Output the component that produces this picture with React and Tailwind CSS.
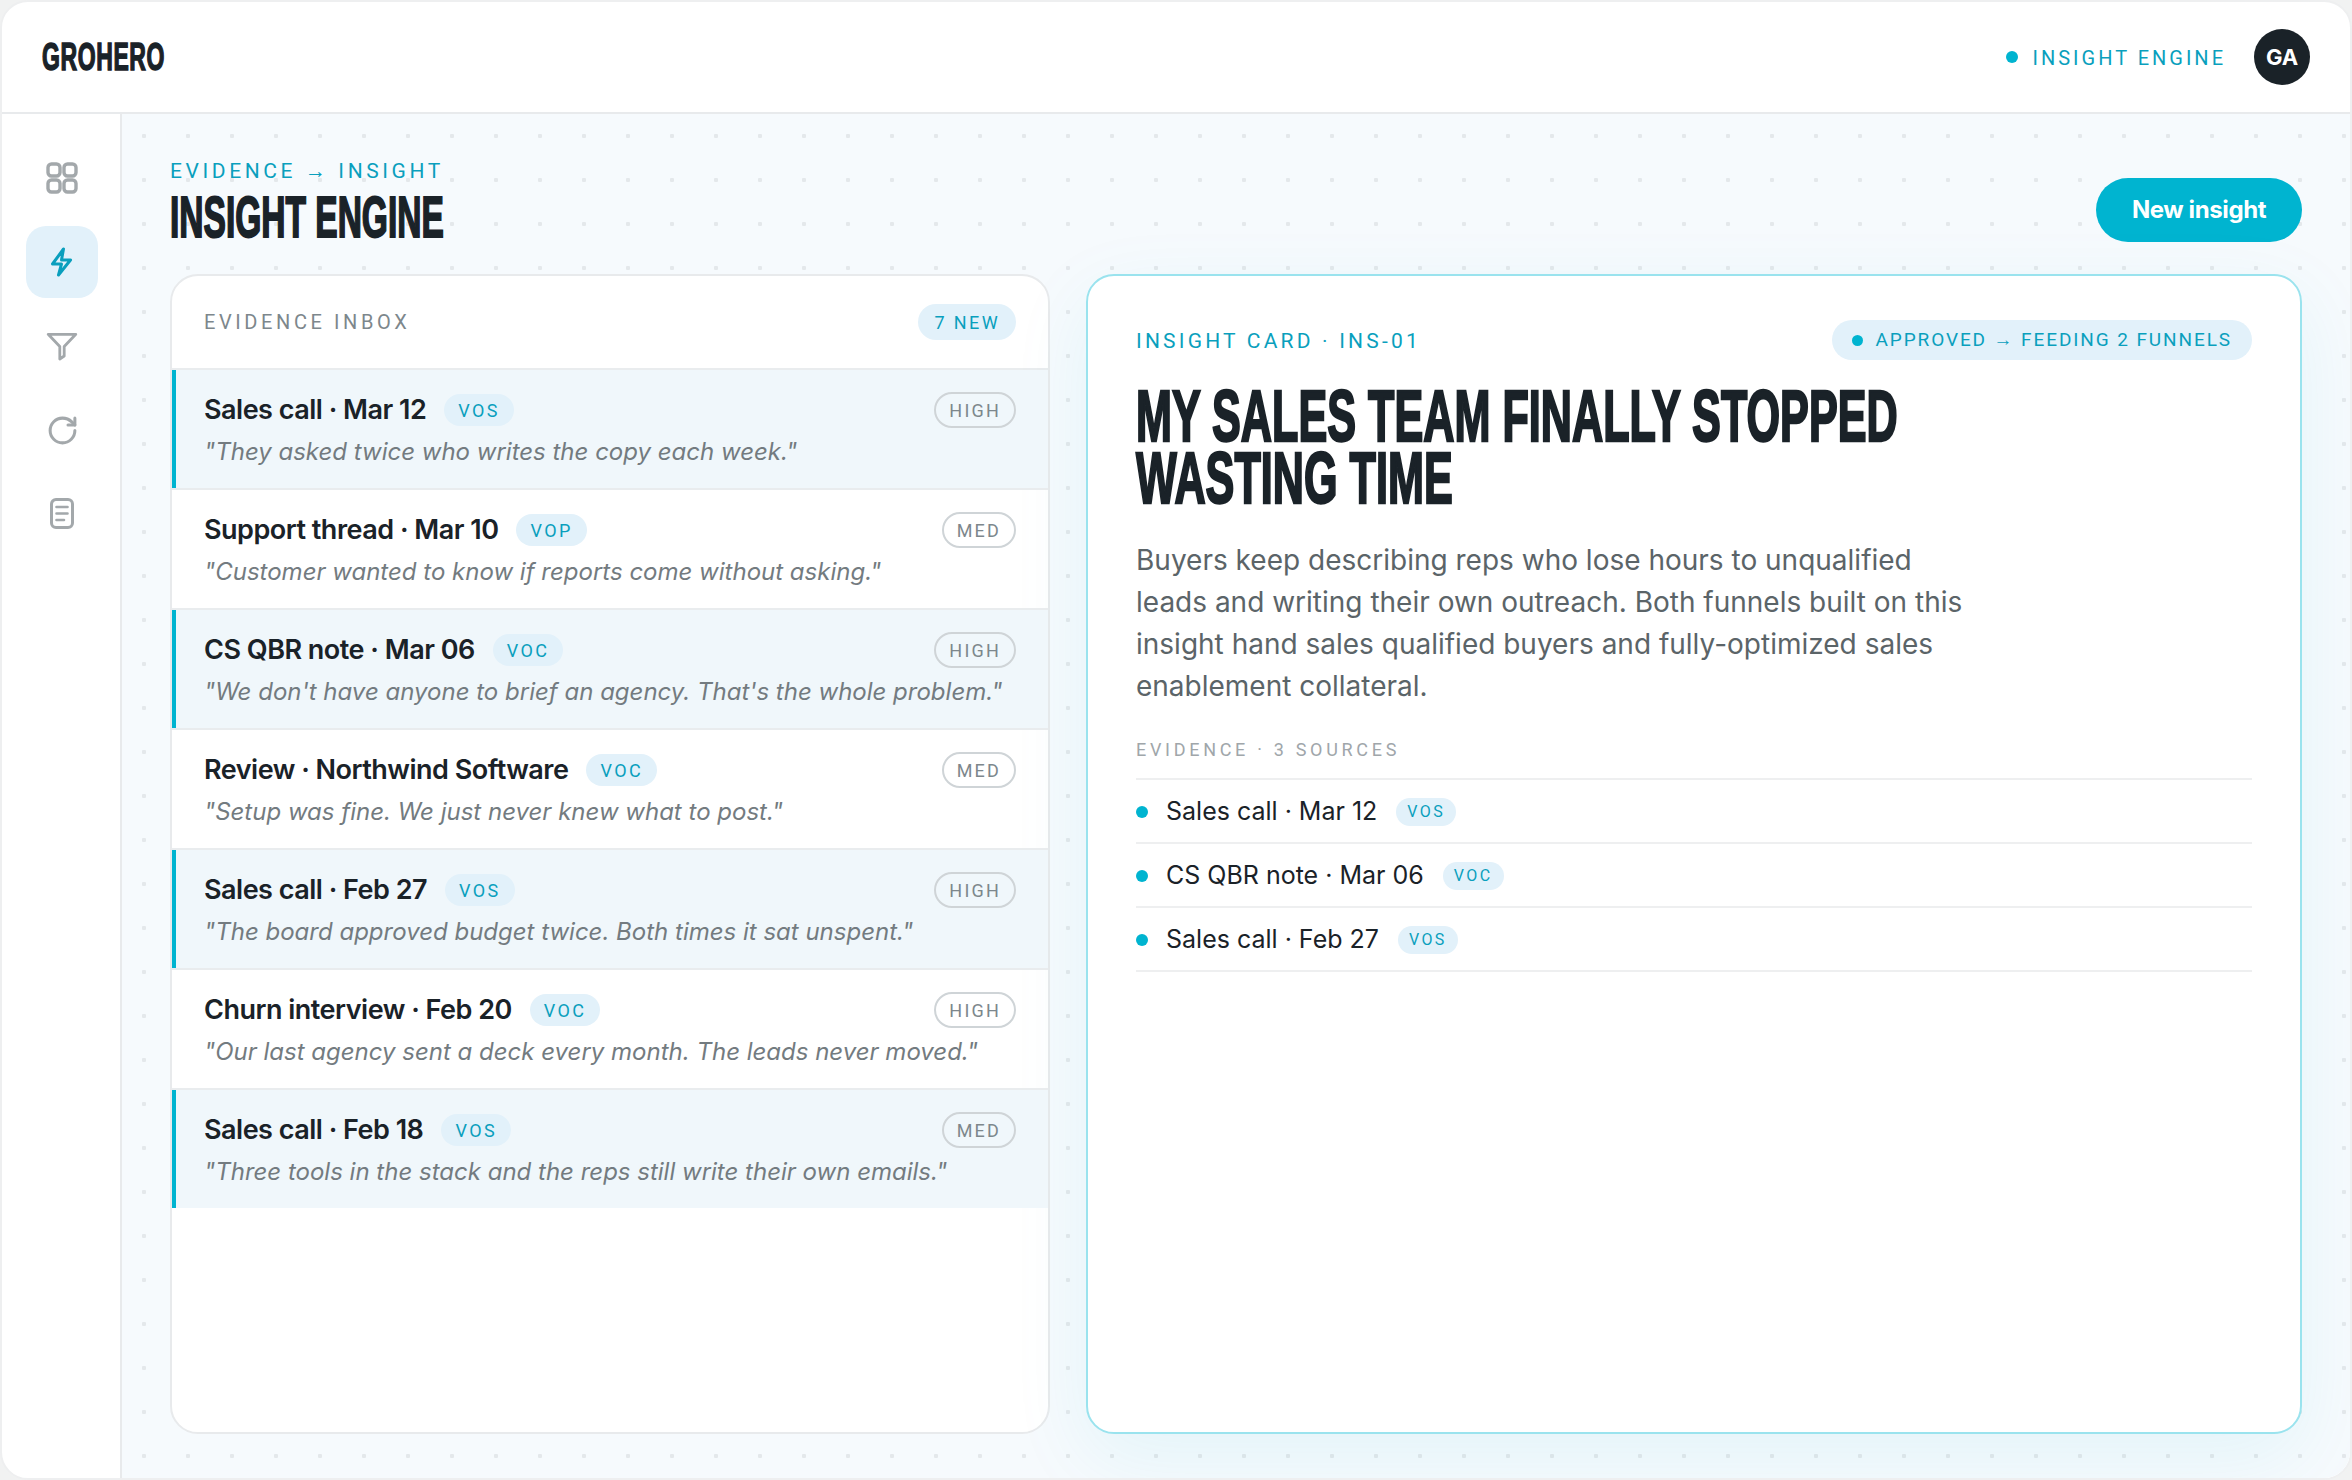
import React from 'react'
import { RotateCw } from 'lucide-react'

const display = "font-['Liberation_Sans',sans-serif] font-bold"
const label = "font-['Roboto',sans-serif]"
const inter = "font-['Inter',sans-serif]"

const evidence = [
  { title: 'Sales call · Mar 12', tag: 'VOS', level: 'HIGH', quote: '"They asked twice who writes the copy each week."', active: true },
  { title: 'Support thread · Mar 10', tag: 'VOP', level: 'MED', quote: '"Customer wanted to know if reports come without asking."' },
  { title: 'CS QBR note · Mar 06', tag: 'VOC', level: 'HIGH', quote: '"We don\'t have anyone to brief an agency. That\'s the whole problem."', active: true },
  { title: 'Review · Northwind Software', tag: 'VOC', level: 'MED', quote: '"Setup was fine. We just never knew what to post."' },
  { title: 'Sales call · Feb 27', tag: 'VOS', level: 'HIGH', quote: '"The board approved budget twice. Both times it sat unspent."', active: true },
  { title: 'Churn interview · Feb 20', tag: 'VOC', level: 'HIGH', quote: '"Our last agency sent a deck every month. The leads never moved."' },
  { title: 'Sales call · Feb 18', tag: 'VOS', level: 'MED', quote: '"Three tools in the stack and the reps still write their own emails."', active: true },
]

const sources = [
  { title: 'Sales call · Mar 12', tag: 'VOS' },
  { title: 'CS QBR note · Mar 06', tag: 'VOC' },
  { title: 'Sales call · Feb 27', tag: 'VOS' },
]

function GridIcon() {
  return (
    <svg width="36" height="36" viewBox="0 0 36 36" fill="none" stroke="#a3a8ab" strokeWidth="3.4">
      <rect x="4" y="4" width="12" height="12" rx="3.5" />
      <rect x="20" y="4" width="12" height="12" rx="3.5" />
      <rect x="4" y="20" width="12" height="12" rx="3.5" />
      <rect x="20" y="20" width="12" height="12" rx="3.5" />
    </svg>
  )
}

function BoltIcon() {
  return (
    <svg width="36" height="36" viewBox="0 0 36 36" fill="none" stroke="#0a9fbd" strokeWidth="3" strokeLinejoin="round">
      <path d="M19.5 5 8.5 20H17.5L14.5 31 26.5 16H17.5Z" />
    </svg>
  )
}

function FunnelIcon() {
  return (
    <svg width="36" height="36" viewBox="0 0 36 36" fill="none" stroke="#a3a8ab" strokeWidth="2.8" strokeLinejoin="round">
      <path d="M4.2 6.3H31.8L20.2 18.5V28L15.8 31V18.5Z" />
    </svg>
  )
}

function DocIcon() {
  return (
    <svg width="36" height="36" viewBox="0 0 36 36" fill="none" stroke="#a3a8ab" strokeWidth="3" strokeLinecap="round">
      <rect x="7.5" y="3.5" width="21" height="28" rx="4.5" />
      <path d="M12.5 11H23.5M12.5 17.5H23.5M12.5 24H20" strokeWidth="2.6" />
    </svg>
  )
}

function EvidenceRow({ item }) {
  return (
    <div className={`relative h-[120px] border-b-2 border-[#e9ecee] pl-8 pr-8 pt-[22px] last:h-[118px] last:border-b-0 ${item.active ? 'bg-[#f0f7fb]' : ''}`}>
      {item.active && <div className="absolute left-0 top-0 bottom-0 w-1 bg-[#00b4d0]" />}
      <div className="flex items-center justify-between h-9">
        <div className="flex items-center gap-[18px]">
          <span className={`${inter} text-[27px] font-semibold tracking-[-0.5px] text-[#1a2228]`}>{item.title}</span>
          <span className={`${label} flex items-center h-8 px-[14px] rounded-full bg-[#e2f1fa] text-[18px] tracking-[2.4px] text-[#0a9fbd]`}>{item.tag}</span>
        </div>
        <span className={`${label} flex items-center h-9 px-[13px] rounded-full border-2 border-[#cfd4d7] text-[18px] tracking-[2.2px] text-[#7d878c]`}>{item.level}</span>
      </div>
      <p className={`${inter} mt-[6px] whitespace-nowrap text-[24px] leading-[36px] italic text-[#737b80]`}>{item.quote}</p>
    </div>
  )
}

function App() {
  return (
    <div className="h-[1480px] w-[2352px] bg-[#f1f2f2] overflow-hidden">
      <div className="flex h-full flex-col overflow-hidden rounded-[28px] border-2 border-[#eeeff0] bg-white">
        <header className="flex h-[112px] shrink-0 items-center justify-between border-b-2 border-[#e8eaec] px-10">
          <div className={`${display} inline-block origin-left scale-x-[0.605] text-[38px] tracking-[1px] text-[#1a2228] [-webkit-text-stroke:1.5px_#1a2228]`}>GROHERO</div>
          <div className="flex items-center">
            <span className="mr-[15px] h-3 w-3 rounded-full bg-[#00b4d0]" />
            <span className={`${label} pt-[1px] text-[20px] tracking-[3px] text-[#0a9fbd]`}>INSIGHT ENGINE</span>
            <div className={`${inter} ml-[28px] flex h-14 w-14 items-center justify-center rounded-full bg-[#1a2228] text-[22px] font-bold text-white`}>GA</div>
          </div>
        </header>

        <div className="flex min-h-0 flex-1">
          <aside className="flex w-[120px] shrink-0 flex-col items-center gap-3 border-r-2 border-[#e8eaec] pt-7 pl-[2px]">
            <div className="flex h-[72px] w-[72px] items-center justify-center rounded-[20px]"><GridIcon /></div>
            <div className="flex h-[72px] w-[72px] items-center justify-center rounded-[20px] bg-[#e2f1fa]"><BoltIcon /></div>
            <div className="flex h-[72px] w-[72px] items-center justify-center rounded-[20px]"><FunnelIcon /></div>
            <div className="flex h-[72px] w-[72px] items-center justify-center rounded-[20px]"><RotateCw size={33} strokeWidth={2.2} color="#a3a8ab" /></div>
            <div className="flex h-[72px] w-[72px] items-center justify-center rounded-[20px]"><DocIcon /></div>
          </aside>

          <main className="flex min-w-0 flex-1 flex-col bg-[#f6fafd] bg-[radial-gradient(circle,#e4e8eb_2px,transparent_2.5px)] bg-[size:44px_44px] px-12 pb-[44px] pt-[45px]">
            <div className="flex h-[115px] shrink-0 items-start justify-between">
              <div>
                <div className={`${label} text-[21px] leading-[24px] tracking-[3.6px] text-[#0a9fbd]`}>EVIDENCE → INSIGHT</div>
                <h1 className={`${display} mt-[6px] w-[500px] origin-left scale-x-[0.578] whitespace-nowrap text-[58px] leading-[56px] text-[#1a2228] [-webkit-text-stroke:2px_#1a2228]`}>INSIGHT ENGINE</h1>
              </div>
              <button className={`${inter} mt-[19px] h-16 w-[206px] rounded-full bg-[#00b4d0] text-[24px] font-bold tracking-[-0.4px] text-white`}>New insight</button>
            </div>

            <div className="grid min-h-0 flex-1 grid-cols-[880px_minmax(0,1fr)] gap-9">
              <section className="overflow-hidden rounded-[28px] border-2 border-[#e8eaec] bg-white">
                <div className="flex h-[94px] items-center justify-between border-b-2 border-[#e9ecee] px-8">
                  <span className={`${label} text-[20px] tracking-[3.6px] text-[#7d878c]`}>EVIDENCE INBOX</span>
                  <span className={`${label} flex h-9 items-center rounded-full bg-[#e2f1fa] px-4 text-[18px] tracking-[2.4px] text-[#0a9fbd]`}>7 NEW</span>
                </div>
                {evidence.map((item, i) => (
                  <EvidenceRow key={i} item={item} />
                ))}
              </section>

              <section className="min-w-0 rounded-[28px] border-2 border-[#9ae3ee] bg-white px-12 pt-[44px] shadow-[0_24px_80px_rgba(0,180,208,0.08)]">
                <div className="flex h-10 items-center justify-between">
                  <span className={`${label} pt-[4px] text-[21px] tracking-[3.2px] text-[#0a9fbd]`}>INSIGHT CARD · INS-01</span>
                  <span className={`${label} flex h-10 items-center gap-3 rounded-full bg-[#e2f1fa] pl-5 pr-5 text-[19px] tracking-[1.9px] text-[#0a9fbd]`}>
                    <span className="h-[11px] w-[11px] rounded-full bg-[#00b4d0]" />
                    APPROVED → FEEDING 2 FUNNELS
                  </span>
                </div>
                <h2 className={`${display} mt-[25px] w-[1120px] origin-left scale-x-[0.6] whitespace-nowrap text-[72px] leading-[62px] text-[#1a2228] [-webkit-text-stroke:2.5px_#1a2228]`}>
                  MY SALES TEAM FINALLY STOPPED<br />WASTING TIME
                </h2>
                <p className={`${inter} mt-[30px] w-[840px] text-[28px] leading-[42px] text-[#5b6468]`}>
                  Buyers keep describing reps who lose hours to unqualified leads and writing their own outreach. Both funnels built on this insight hand sales qualified buyers and fully-optimized sales enablement collateral.
                </p>
                <div className={`${label} mt-[31px] text-[18px] leading-[24px] tracking-[3.7px] text-[#a0a6aa]`}>EVIDENCE · 3 SOURCES</div>
                <div className="mt-[16px] border-t-2 border-[#eeeff0]">
                  {sources.map((s, i) => (
                    <div key={i} className="flex h-16 items-center border-b-2 border-[#eeeff0] pt-[2px]">
                      <span className="mr-[18px] h-3 w-3 rounded-full bg-[#00b4d0]" />
                      <span className={`${inter} mr-[19px] text-[25px] text-[#1a2228]`}>{s.title}</span>
                      <span className={`${label} flex h-7 items-center rounded-full bg-[#e2f1fa] px-[11px] text-[16px] tracking-[2.4px] text-[#0a9fbd]`}>{s.tag}</span>
                    </div>
                  ))}
                </div>
              </section>
            </div>
          </main>
        </div>
      </div>
    </div>
  )
}

export default App
